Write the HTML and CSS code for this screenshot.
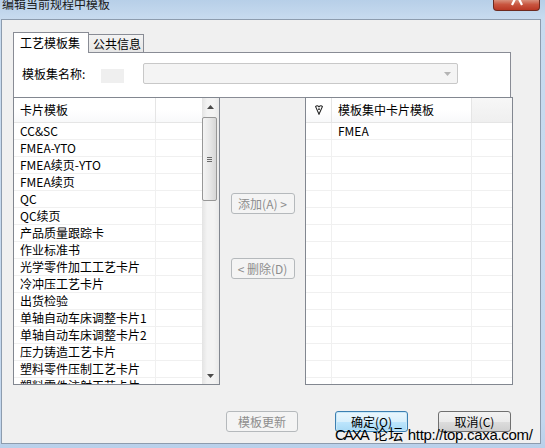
FILE: index.html
```html
<!DOCTYPE html>
<html lang="zh-CN">
<head>
<meta charset="utf-8">
<title>编辑当前规程中模板</title>
<link rel="stylesheet" href="styles.css">
</head>
<body>
<div class="window">
  <div class="titlebar">
    <span class="title">编辑当前规程中模板</span>
    <span class="close"><svg width="12" height="6" viewBox="0 0 12 6"><path d="M4 -1 L1 5 M8 -1 L11 5" stroke="#fff" stroke-width="2.2" fill="none"/></svg></span>
  </div>
  <div class="client">
    <div class="tabs">
      <div class="tab active">工艺模板集</div>
      <div class="tab">公共信息</div>
    </div>
    <div class="panel">
      <span class="label">模板集名称:</span>
      <span class="ghost"></span>
      <div class="combo"><svg class="arrow" width="7" height="4" viewBox="0 0 7 4"><path d="M0 0 H7 L3.5 4 Z" fill="#b4b4b4"/></svg></div>
    </div>
    <div class="lists">
      <div class="list left">
        <div class="grid">
          <div class="head"><div class="c1">卡片模板</div><div class="c2"></div></div>
          <div class="row"><div class="c1">CC&amp;SC</div><div class="c2"></div></div>
          <div class="row"><div class="c1">FMEA-YTO</div><div class="c2"></div></div>
          <div class="row"><div class="c1">FMEA续页-YTO</div><div class="c2"></div></div>
          <div class="row"><div class="c1">FMEA续页</div><div class="c2"></div></div>
          <div class="row"><div class="c1">QC</div><div class="c2"></div></div>
          <div class="row"><div class="c1">QC续页</div><div class="c2"></div></div>
          <div class="row"><div class="c1">产品质量跟踪卡</div><div class="c2"></div></div>
          <div class="row"><div class="c1">作业标准书</div><div class="c2"></div></div>
          <div class="row"><div class="c1">光学零件加工工艺卡片</div><div class="c2"></div></div>
          <div class="row"><div class="c1">冷冲压工艺卡片</div><div class="c2"></div></div>
          <div class="row"><div class="c1">出货检验</div><div class="c2"></div></div>
          <div class="row"><div class="c1">单轴自动车床调整卡片1</div><div class="c2"></div></div>
          <div class="row"><div class="c1">单轴自动车床调整卡片2</div><div class="c2"></div></div>
          <div class="row"><div class="c1">压力铸造工艺卡片</div><div class="c2"></div></div>
          <div class="row"><div class="c1">塑料零件压制工艺卡片</div><div class="c2"></div></div>
          <div class="row"><div class="c1">塑料零件注射工艺卡片</div><div class="c2"></div></div>
        </div>
        <div class="scrollbar">
          <div class="sb-btn"><svg width="7" height="4" viewBox="0 0 7 4"><path d="M3.5 0 L7 4 H0 Z" fill="#4a4a4a"/></svg></div>
          <div class="sb-track">
            <div class="thumb"><span class="grip"></span></div>
          </div>
          <div class="sb-btn"><svg width="7" height="4" viewBox="0 0 7 4"><path d="M0 0 H7 L3.5 4 Z" fill="#4a4a4a"/></svg></div>
        </div>
      </div>
      <div class="mid">
        <button class="btn disabled add" type="button">添加(A) &gt;</button>
        <button class="btn disabled del" type="button">&lt; 删除(D)</button>
      </div>
      <div class="list right">
        <div class="grid">
          <div class="head"><div class="c0"><svg width="8" height="10" viewBox="0 0 8 10"><path d="M0.6 1.6 Q2 -0.2 4 1.8 Q6 -0.2 7.4 1.6 L4 9.2 Z" fill="none" stroke="#222" stroke-width="1.1"/><circle cx="4" cy="4.2" r="0.9" fill="#222"/></svg></div><div class="c1">模板集中卡片模板</div><div class="c2"></div></div>
          <div class="row"><div class="c0"></div><div class="c1">FMEA</div><div class="c2"></div></div>
          <div class="row"><div class="c0"></div><div class="c1"></div><div class="c2"></div></div>
          <div class="row"><div class="c0"></div><div class="c1"></div><div class="c2"></div></div>
          <div class="row"><div class="c0"></div><div class="c1"></div><div class="c2"></div></div>
          <div class="row"><div class="c0"></div><div class="c1"></div><div class="c2"></div></div>
          <div class="row"><div class="c0"></div><div class="c1"></div><div class="c2"></div></div>
          <div class="row"><div class="c0"></div><div class="c1"></div><div class="c2"></div></div>
          <div class="row"><div class="c0"></div><div class="c1"></div><div class="c2"></div></div>
          <div class="row"><div class="c0"></div><div class="c1"></div><div class="c2"></div></div>
          <div class="row"><div class="c0"></div><div class="c1"></div><div class="c2"></div></div>
          <div class="row"><div class="c0"></div><div class="c1"></div><div class="c2"></div></div>
          <div class="row"><div class="c0"></div><div class="c1"></div><div class="c2"></div></div>
          <div class="row"><div class="c0"></div><div class="c1"></div><div class="c2"></div></div>
          <div class="row"><div class="c0"></div><div class="c1"></div><div class="c2"></div></div>
          <div class="row"><div class="c0"></div><div class="c1"></div><div class="c2"></div></div>
          <div class="row"><div class="c0"></div><div class="c1"></div><div class="c2"></div></div>
        </div>
      </div>
    </div>
    <div class="footer">
      <button class="btn disabled update" type="button">模板更新</button>
      <button class="btn default ok" type="button">确定(O)</button>
      <button class="btn normal cancel" type="button">取消(C)</button>
    </div>
  </div>
</div>
<div class="watermark"><span class="wm-a">CAXA</span><span class="wm-b">论坛</span> http://top.caxa.com/</div>
</body>
</html>
```

FILE: styles.css
```css
* { box-sizing: border-box; }
html, body { margin: 0; padding: 0; }
body {
  width: 545px;
  height: 448px;
  overflow: hidden;
  position: relative;
  background: #c4d8ee;
  font-family: "Noto Sans CJK SC", "Liberation Sans", sans-serif;
  font-size: 12px;
  color: #000;
}
.window {
  width: 545px;
  height: 448px;
  display: flex;
  flex-direction: column;
  background: linear-gradient(#b7cfe8, #c8dbef 19px, #c3d7ee 420px, #b9d0ea);
}
.titlebar {
  height: 19px;
  display: flex;
  align-items: flex-start;
  overflow: hidden;
}
.title {
  margin: -3px 0 0 2px;
  line-height: 14px;
  color: #1b1b1b;
}
.close {
  margin-left: auto;
  margin-right: 5px;
  width: 47px;
  height: 11px;
  display: flex;
  justify-content: center;
  align-items: flex-start;
  background: linear-gradient(#d8907c, #c9553f 45%, #b93824);
  border: 1px solid #6d2a1f;
  border-top: none;
  border-radius: 0 0 4px 4px;
}
.client {
  margin: 0 4px 4px 1px;
  height: 425px;
  border: 1px solid #8d9cae;
  background: #f0f0f0;
  display: flex;
  flex-direction: column;
}
.tabs {
  display: flex;
  align-items: flex-end;
  height: 20px;
  margin: 12px 0 0 11px;
  position: relative;
  z-index: 1;
}
.tab {
  height: 18px;
  width: 55px;
  border: 1px solid #898c95;
  border-left: none;
  border-bottom: none;
  background: linear-gradient(#f3f3f3, #e6e6e6);
  padding-left: 4px;
  line-height: 17px;
  white-space: nowrap;
}
.tab.active {
  width: 76px;
  height: 21px;
  margin-bottom: -1px;
  border-left: 1px solid #898c95;
  background: #fff;
  padding-left: 6px;
  line-height: 20px;
}
.panel {
  margin-left: 11px;
  width: 498px;
  height: 45px;
  background: #fff;
  border: 1px solid #898c95;
  border-bottom: none;
  display: flex;
  align-items: flex-start;
  padding: 10px 0 0 8px;
}
.label {
  line-height: 21px;
  width: 66px;
  white-space: nowrap;
}
.ghost {
  margin: 6px 0 0 13px;
  width: 23px;
  height: 14px;
  background: #efefef;
}
.combo {
  margin-left: 19px;
  width: 315px;
  height: 21px;
  border: 1px solid #c8c8c8;
  border-radius: 2px;
  background: #f4f4f4;
  display: flex;
  align-items: center;
  justify-content: flex-end;
  padding-right: 6px;
}
.lists {
  display: flex;
  margin-left: 11px;
  height: 288px;
}
.list {
  border: 1px solid #828790;
  background: #fff;
  overflow: hidden;
  display: flex;
}
.list.left { width: 207px; }
.list.right { width: 208px; }
.grid {
  flex: 1;
  overflow: hidden;
}
.head {
  display: flex;
  height: 25px;
  border-bottom: 1px solid #e5e5e5;
  background: linear-gradient(#ffffff, #ffffff 50%, #f8f9fa);
}
.row {
  display: flex;
  height: 17px;
  border-bottom: 1px solid #f0f0f0;
}
.c0, .c1, .c2 {
  white-space: nowrap;
  overflow: hidden;
}
.row .c0, .row .c1 { border-right: 1px solid #f0f0f0; line-height: 16px; }
.head .c0, .head .c1 { border-right: 1px solid #e5e5e5; line-height: 24px; }
.left .c1 { width: 142px; padding-left: 6px; }
.c2 { flex: 1; }
.right .c0 {
  width: 26px;
  display: flex;
  align-items: center;
  justify-content: center;
}
.right .c1 { width: 140px; padding-left: 6px; }
.right .head .c2 { background: linear-gradient(#f7f7f7, #efefef); }
.scrollbar {
  width: 17px;
  display: flex;
  flex-direction: column;
  background: linear-gradient(to right, #e3e3e3, #f3f3f3 30%, #f3f3f3 70%, #e9e9e9);
}
.sb-btn {
  height: 17px;
  display: flex;
  align-items: center;
  justify-content: center;
}
.sb-track { flex: 1; }
.thumb {
  margin-top: 2px;
  width: 15px;
  height: 84px;
  border: 1px solid #979797;
  border-radius: 2px;
  background: linear-gradient(to right, #f4f4f4, #e8e8e8 50%, #d6d6d6);
  display: flex;
  align-items: center;
  justify-content: center;
}
.grip {
  width: 5px;
  height: 5px;
  border-top: 1px solid #6b6b6b;
  border-bottom: 1px solid #6b6b6b;
  background: linear-gradient(transparent 1px, #6b6b6b 1px, #6b6b6b 2px, transparent 2px);
}
.mid {
  width: 85px;
  border-top: 1px solid #898c95;
  display: flex;
  flex-direction: column;
  align-items: center;
  padding-top: 95px;
}
.btn {
  height: 21px;
  padding: 0;
  font-family: "Noto Sans CJK SC", "Liberation Sans", sans-serif;
  font-size: 12px;
  line-height: 19px;
  border-radius: 3px;
  white-space: nowrap;
}
.btn.disabled {
  border: 1px solid #b5b9bc;
  background: #f4f4f4;
  color: #8d8d8d;
}
.btn.normal {
  border: 1px solid #707070;
  background: linear-gradient(#f2f2f2, #ebebeb 50%, #dddddd 51%, #cfcfcf);
  color: #000;
}
.btn.default {
  border: 1px solid #3c7fb1;
  background: linear-gradient(#eaf6fd, #d9f0fc 50%, #bee6fd 51%, #a7d9f5);
  box-shadow: inset 0 0 0 1px #c8e8f8;
  color: #000;
}
.add, .del { width: 64px; }
.del { margin-top: 44px; }
.footer {
  display: flex;
  margin: 26px 0 0 224px;
}
.update { width: 72px; }
.ok { width: 73px; margin-left: 37px; }
.cancel { width: 73px; margin-left: 30px; }
.watermark {
  position: absolute;
  left: 335px;
  top: 426px;
  font-family: "Liberation Sans", "Noto Sans CJK SC", sans-serif;
  font-size: 15px;
  line-height: 15px;
  letter-spacing: -0.3px;
  color: #000;
  white-space: nowrap;
}
.wm-a {
  letter-spacing: -2px;
}
.wm-b {
  font-family: "Noto Sans CJK SC", sans-serif;
  letter-spacing: 0.5px;
  margin-left: 5px;
}
```
